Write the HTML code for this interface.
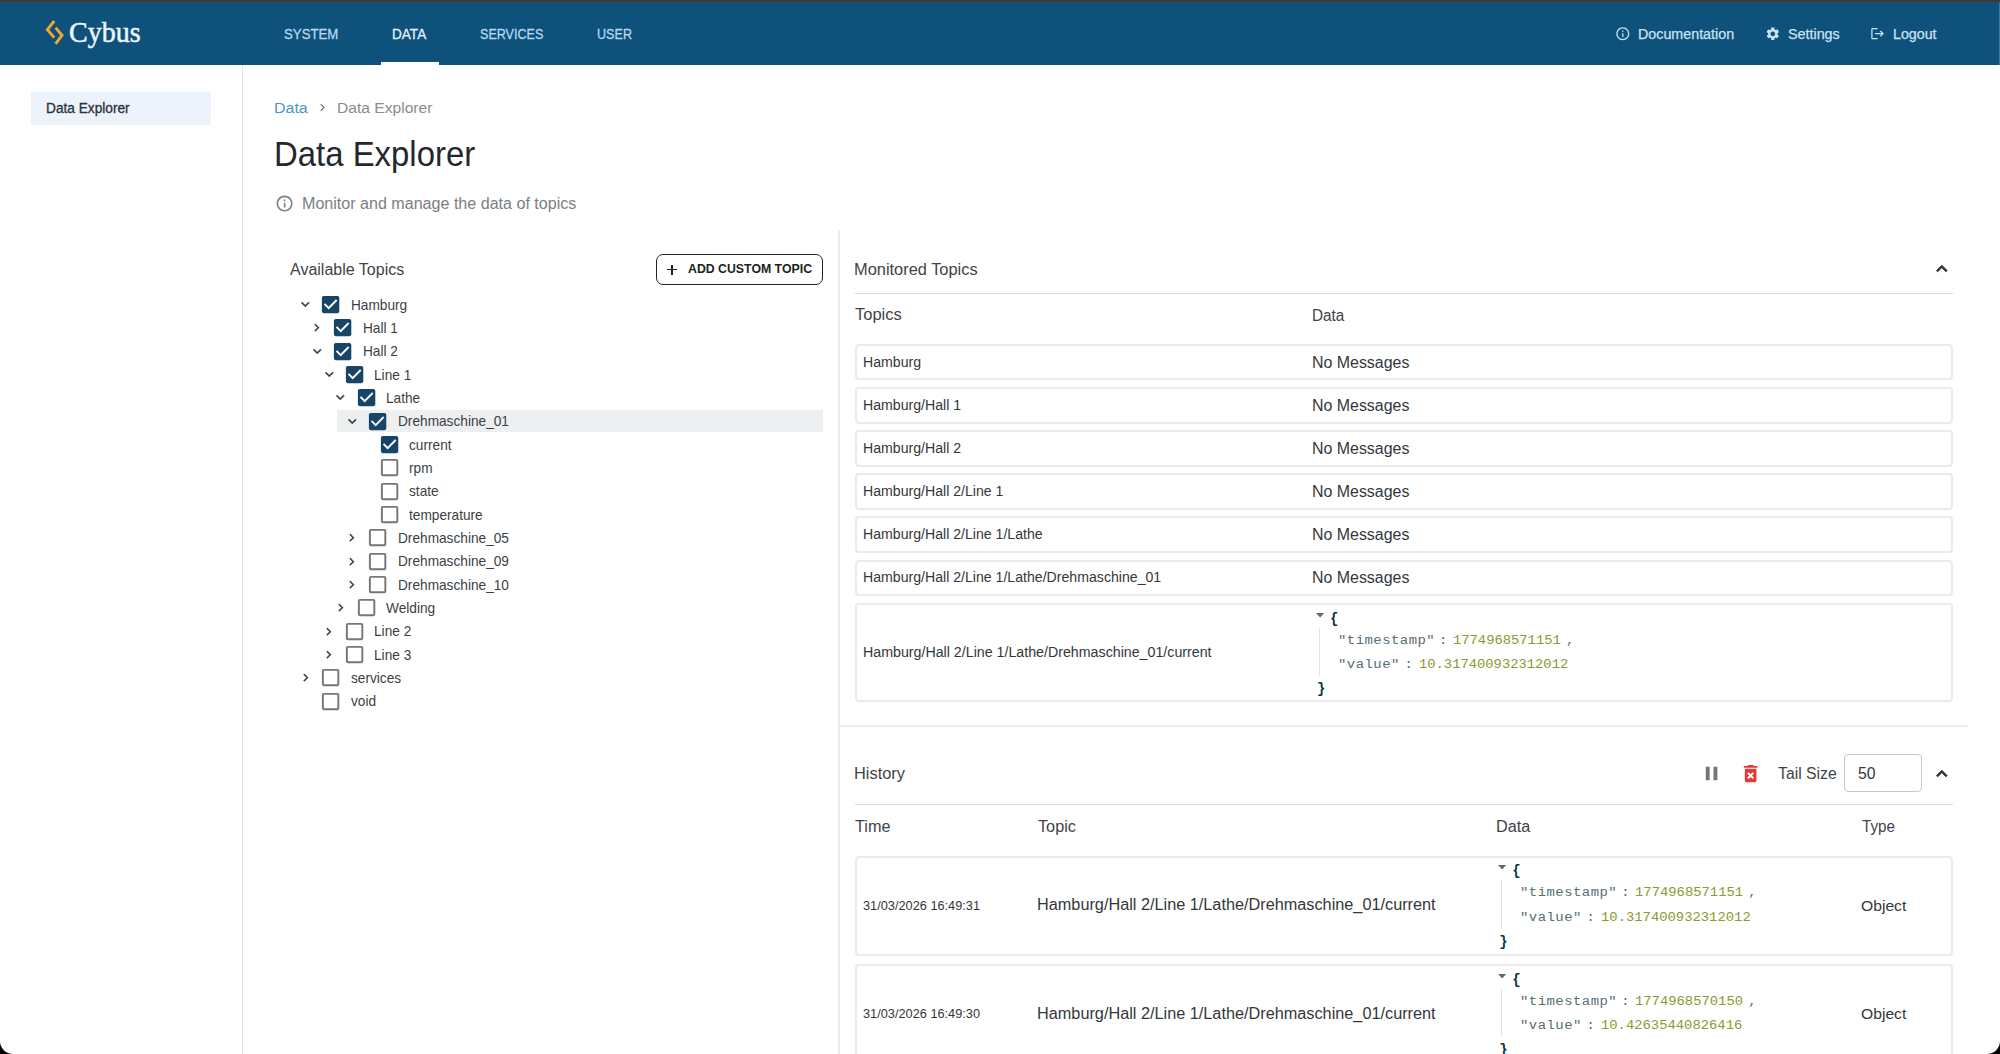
<!DOCTYPE html>
<html><head><meta charset="utf-8"><title>Data Explorer</title>
<style>
html,body{margin:0;padding:0;width:2000px;height:1054px;overflow:hidden;background:#000;}
#win{position:absolute;left:0;top:0;width:2000px;height:1054px;background:#fff;overflow:hidden;border-radius:0 0 13px 13px;font-family:"Liberation Sans",sans-serif;}
.t{position:absolute;white-space:pre;line-height:1;transform-origin:0 0;}
.a{position:absolute;box-sizing:border-box;}
svg{position:absolute;overflow:visible;}
</style></head><body><div id="win">
<div class="a" style="left:0.00px;top:0.00px;width:2000.00px;height:2.00px;background:#3c3b3b;"></div>
<div class="a" style="left:0.00px;top:2.00px;width:2000.00px;height:1.00px;background:#2f4c5f;"></div>
<div class="a" style="left:0.00px;top:3.00px;width:2000.00px;height:62.00px;background:#0e517b;"></div>
<div class="a" style="left:381.00px;top:62.00px;width:58.00px;height:3.00px;background:#ffffff;"></div>
<div class="a" style="left:1999.00px;top:2.20px;width:1.00px;height:62.80px;background:#3a78a6;"></div>
<svg style="left:40px;top:15px" width="30" height="35" viewBox="40 15 30 35"><polyline points="54.2,21.0 47.4,29.6 54.2,37.6" fill="none" stroke="#f0a92e" stroke-width="2.9" stroke-linejoin="miter"/><polyline points="55.6,27.6 62.0,35.4 55.6,43.8" fill="none" stroke="#f0a92e" stroke-width="2.9" stroke-linejoin="miter"/></svg>
<svg style="left:1614.90px;top:26.10px" width="15.60" height="15.60" viewBox="0 0 24 24"><path d="M11 7h2v2h-2zm0 4h2v6h-2zm1-9C6.48 2 2 6.48 2 12s4.48 10 10 10 10-4.48 10-10S17.52 2 12 2zm0 18c-4.41 0-8-3.59-8-8s3.59-8 8-8 8 3.59 8 8-3.59 8-8 8z" fill="#c9e3f5" /></svg>
<svg style="left:1765.00px;top:26.00px" width="15.60" height="15.60" viewBox="0 0 24 24"><path d="M19.14,12.94c0.04-0.3,0.06-0.61,0.06-0.94c0-0.32-0.02-0.64-0.07-0.94l2.03-1.58c0.18-0.14,0.23-0.41,0.12-0.61 l-1.92-3.32c-0.12-0.22-0.37-0.29-0.59-0.22l-2.39,0.96c-0.5-0.38-1.03-0.7-1.62-0.94L14.4,2.81c-0.04-0.24-0.24-0.41-0.48-0.41 h-3.84c-0.24,0-0.43,0.17-0.47,0.41L9.25,5.35C8.66,5.590,8.12,5.92,7.63,6.29L5.24,5.33c-0.22-0.08-0.47,0-0.59,0.22L2.74,8.87 C2.62,9.08,2.66,9.34,2.86,9.48l2.03,1.58C4.84,11.36,4.8,11.69,4.8,12s0.02,0.64,0.07,0.94l-2.03,1.58 c-0.18,0.14-0.23,0.41-0.12,0.61l1.92,3.32c0.12,0.22,0.37,0.29,0.59,0.22l2.39-0.96c0.5,0.38,1.03,0.7,1.62,0.94l0.36,2.54 c0.05,0.24,0.24,0.41,0.48,0.41h3.84c0.24,0,0.44-0.17,0.47-0.41l0.36-2.54c0.59-0.24,1.13-0.56,1.62-0.94l2.39,0.96 c0.22,0.08,0.47,0,0.59-0.22l1.92-3.32c0.12-0.22,0.07-0.47-0.12-0.61L19.14,12.94z M12,15.6c-1.98,0-3.6-1.62-3.6-3.6 s1.62-3.6,3.6-3.6s3.6,1.62,3.6,3.6S13.98,15.6,12,15.6z" fill="#c9e3f5" /></svg>
<svg style="left:1870.30px;top:25.90px" width="15.19" height="15.19" viewBox="0 0 24 24"><path d="M17 7l-1.41 1.41L18.17 11H8v2h10.17l-2.58 2.58L17 17l5-5zM4 5h8V3H4c-1.1 0-2 .9-2 2v14c0 1.1.9 2 2 2h8v-2H4V5z" fill="#c9e3f5" /></svg>
<div class="a" style="left:242.00px;top:65.00px;width:1.00px;height:989.00px;background:#e4e4e4;"></div>
<div class="a" style="left:30.80px;top:92.00px;width:180.20px;height:33.00px;background:#ecf3fb;"></div>
<svg style="left:314.60px;top:99.90px" width="14.88" height="14.88" viewBox="0 0 24 24"><path d="M10 6L8.59 7.41 13.17 12l-4.58 4.59L10 18l6-6z" fill="#6f7276" /></svg>
<svg style="left:274.90px;top:193.80px" width="19.20" height="19.20" viewBox="0 0 24 24"><path d="M11 7h2v2h-2zm0 4h2v6h-2zm1-9C6.48 2 2 6.48 2 12s4.48 10 10 10 10-4.48 10-10S17.52 2 12 2zm0 18c-4.41 0-8-3.59-8-8s3.59-8 8-8 8 3.59 8 8-3.59 8-8 8z" fill="#7c7e81" /></svg>
<div class="a" style="left:655.50px;top:254.00px;width:167.00px;height:30.50px;border:1.2px solid #222;border-radius:7px;"></div>
<div class="a" style="left:667.00px;top:268.80px;width:10.00px;height:1.60px;background:#222;"></div>
<div class="a" style="left:671.20px;top:264.60px;width:1.60px;height:10.00px;background:#222;"></div>
<div class="a" style="left:838.00px;top:230.00px;width:2.00px;height:824.00px;background:#ececec;"></div>
<div class="a" style="left:336.50px;top:409.80px;width:486.00px;height:22.70px;background:#eeeff1;"></div>
<svg style="left:319.40px;top:293.10px" width="23.20" height="23.20" viewBox="0 0 24 24"><path d="M19 3H5c-1.11 0-2 .9-2 2v14c0 1.1.89 2 2 2h14c1.11 0 2-.9 2-2V5c0-1.1-.89-2-2-2zm-9 14l-5-5 1.41-1.41L10 14.17l7.59-7.59L19 8l-9 9z" fill="#164567" /></svg>
<svg style="left:297.22px;top:296.11px" width="16.56" height="16.56" viewBox="0 0 24 24"><path d="M16.59 8.59L12 13.17 7.41 8.59 6 10l6 6 6-6z" fill="#3b3f45" stroke="#3b3f45" stroke-width="0.5"/></svg>
<svg style="left:331.10px;top:316.43px" width="23.20" height="23.20" viewBox="0 0 24 24"><path d="M19 3H5c-1.11 0-2 .9-2 2v14c0 1.1.89 2 2 2h14c1.11 0 2-.9 2-2V5c0-1.1-.89-2-2-2zm-9 14l-5-5 1.41-1.41L10 14.17l7.59-7.59L19 8l-9 9z" fill="#164567" /></svg>
<svg style="left:309.33px;top:320.25px" width="15.36" height="15.36" viewBox="0 0 24 24"><path d="M10 6L8.59 7.41 13.17 12l-4.58 4.59L10 18l6-6z" fill="#3b3f45" stroke="#3b3f45" stroke-width="0.5"/></svg>
<svg style="left:331.10px;top:339.76px" width="23.20" height="23.20" viewBox="0 0 24 24"><path d="M19 3H5c-1.11 0-2 .9-2 2v14c0 1.1.89 2 2 2h14c1.11 0 2-.9 2-2V5c0-1.1-.89-2-2-2zm-9 14l-5-5 1.41-1.41L10 14.17l7.59-7.59L19 8l-9 9z" fill="#164567" /></svg>
<svg style="left:308.92px;top:342.77px" width="16.56" height="16.56" viewBox="0 0 24 24"><path d="M16.59 8.59L12 13.17 7.41 8.59 6 10l6 6 6-6z" fill="#3b3f45" stroke="#3b3f45" stroke-width="0.5"/></svg>
<svg style="left:342.80px;top:363.09px" width="23.20" height="23.20" viewBox="0 0 24 24"><path d="M19 3H5c-1.11 0-2 .9-2 2v14c0 1.1.89 2 2 2h14c1.11 0 2-.9 2-2V5c0-1.1-.89-2-2-2zm-9 14l-5-5 1.41-1.41L10 14.17l7.59-7.59L19 8l-9 9z" fill="#164567" /></svg>
<svg style="left:320.62px;top:366.10px" width="16.56" height="16.56" viewBox="0 0 24 24"><path d="M16.59 8.59L12 13.17 7.41 8.59 6 10l6 6 6-6z" fill="#3b3f45" stroke="#3b3f45" stroke-width="0.5"/></svg>
<svg style="left:354.50px;top:386.42px" width="23.20" height="23.20" viewBox="0 0 24 24"><path d="M19 3H5c-1.11 0-2 .9-2 2v14c0 1.1.89 2 2 2h14c1.11 0 2-.9 2-2V5c0-1.1-.89-2-2-2zm-9 14l-5-5 1.41-1.41L10 14.17l7.59-7.59L19 8l-9 9z" fill="#164567" /></svg>
<svg style="left:332.32px;top:389.43px" width="16.56" height="16.56" viewBox="0 0 24 24"><path d="M16.59 8.59L12 13.17 7.41 8.59 6 10l6 6 6-6z" fill="#3b3f45" stroke="#3b3f45" stroke-width="0.5"/></svg>
<svg style="left:366.20px;top:409.75px" width="23.20" height="23.20" viewBox="0 0 24 24"><path d="M19 3H5c-1.11 0-2 .9-2 2v14c0 1.1.89 2 2 2h14c1.11 0 2-.9 2-2V5c0-1.1-.89-2-2-2zm-9 14l-5-5 1.41-1.41L10 14.17l7.59-7.59L19 8l-9 9z" fill="#164567" /></svg>
<svg style="left:344.02px;top:412.76px" width="16.56" height="16.56" viewBox="0 0 24 24"><path d="M16.59 8.59L12 13.17 7.41 8.59 6 10l6 6 6-6z" fill="#3b3f45" stroke="#3b3f45" stroke-width="0.5"/></svg>
<svg style="left:377.90px;top:433.08px" width="23.20" height="23.20" viewBox="0 0 24 24"><path d="M19 3H5c-1.11 0-2 .9-2 2v14c0 1.1.89 2 2 2h14c1.11 0 2-.9 2-2V5c0-1.1-.89-2-2-2zm-9 14l-5-5 1.41-1.41L10 14.17l7.59-7.59L19 8l-9 9z" fill="#164567" /></svg>
<svg style="left:377.90px;top:456.41px" width="23.20" height="23.20" viewBox="0 0 24 24"><path d="M19 5v14H5V5h14m0-2H5c-1.1 0-2 .9-2 2v14c0 1.1.9 2 2 2h14c1.1 0 2-.9 2-2V5c0-1.1-.9-2-2-2z" fill="#767676" /></svg>
<svg style="left:377.90px;top:479.74px" width="23.20" height="23.20" viewBox="0 0 24 24"><path d="M19 5v14H5V5h14m0-2H5c-1.1 0-2 .9-2 2v14c0 1.1.9 2 2 2h14c1.1 0 2-.9 2-2V5c0-1.1-.9-2-2-2z" fill="#767676" /></svg>
<svg style="left:377.90px;top:503.07px" width="23.20" height="23.20" viewBox="0 0 24 24"><path d="M19 5v14H5V5h14m0-2H5c-1.1 0-2 .9-2 2v14c0 1.1.9 2 2 2h14c1.1 0 2-.9 2-2V5c0-1.1-.9-2-2-2z" fill="#767676" /></svg>
<svg style="left:366.20px;top:526.40px" width="23.20" height="23.20" viewBox="0 0 24 24"><path d="M19 5v14H5V5h14m0-2H5c-1.1 0-2 .9-2 2v14c0 1.1.9 2 2 2h14c1.1 0 2-.9 2-2V5c0-1.1-.9-2-2-2z" fill="#767676" /></svg>
<svg style="left:344.43px;top:530.22px" width="15.36" height="15.36" viewBox="0 0 24 24"><path d="M10 6L8.59 7.41 13.17 12l-4.58 4.59L10 18l6-6z" fill="#3b3f45" stroke="#3b3f45" stroke-width="0.5"/></svg>
<svg style="left:366.20px;top:549.73px" width="23.20" height="23.20" viewBox="0 0 24 24"><path d="M19 5v14H5V5h14m0-2H5c-1.1 0-2 .9-2 2v14c0 1.1.9 2 2 2h14c1.1 0 2-.9 2-2V5c0-1.1-.9-2-2-2z" fill="#767676" /></svg>
<svg style="left:344.43px;top:553.55px" width="15.36" height="15.36" viewBox="0 0 24 24"><path d="M10 6L8.59 7.41 13.17 12l-4.58 4.59L10 18l6-6z" fill="#3b3f45" stroke="#3b3f45" stroke-width="0.5"/></svg>
<svg style="left:366.20px;top:573.06px" width="23.20" height="23.20" viewBox="0 0 24 24"><path d="M19 5v14H5V5h14m0-2H5c-1.1 0-2 .9-2 2v14c0 1.1.9 2 2 2h14c1.1 0 2-.9 2-2V5c0-1.1-.9-2-2-2z" fill="#767676" /></svg>
<svg style="left:344.43px;top:576.88px" width="15.36" height="15.36" viewBox="0 0 24 24"><path d="M10 6L8.59 7.41 13.17 12l-4.58 4.59L10 18l6-6z" fill="#3b3f45" stroke="#3b3f45" stroke-width="0.5"/></svg>
<svg style="left:354.50px;top:596.39px" width="23.20" height="23.20" viewBox="0 0 24 24"><path d="M19 5v14H5V5h14m0-2H5c-1.1 0-2 .9-2 2v14c0 1.1.9 2 2 2h14c1.1 0 2-.9 2-2V5c0-1.1-.9-2-2-2z" fill="#767676" /></svg>
<svg style="left:332.73px;top:600.21px" width="15.36" height="15.36" viewBox="0 0 24 24"><path d="M10 6L8.59 7.41 13.17 12l-4.58 4.59L10 18l6-6z" fill="#3b3f45" stroke="#3b3f45" stroke-width="0.5"/></svg>
<svg style="left:342.80px;top:619.72px" width="23.20" height="23.20" viewBox="0 0 24 24"><path d="M19 5v14H5V5h14m0-2H5c-1.1 0-2 .9-2 2v14c0 1.1.9 2 2 2h14c1.1 0 2-.9 2-2V5c0-1.1-.9-2-2-2z" fill="#767676" /></svg>
<svg style="left:321.03px;top:623.54px" width="15.36" height="15.36" viewBox="0 0 24 24"><path d="M10 6L8.59 7.41 13.17 12l-4.58 4.59L10 18l6-6z" fill="#3b3f45" stroke="#3b3f45" stroke-width="0.5"/></svg>
<svg style="left:342.80px;top:643.05px" width="23.20" height="23.20" viewBox="0 0 24 24"><path d="M19 5v14H5V5h14m0-2H5c-1.1 0-2 .9-2 2v14c0 1.1.9 2 2 2h14c1.1 0 2-.9 2-2V5c0-1.1-.9-2-2-2z" fill="#767676" /></svg>
<svg style="left:321.03px;top:646.87px" width="15.36" height="15.36" viewBox="0 0 24 24"><path d="M10 6L8.59 7.41 13.17 12l-4.58 4.59L10 18l6-6z" fill="#3b3f45" stroke="#3b3f45" stroke-width="0.5"/></svg>
<svg style="left:319.40px;top:666.38px" width="23.20" height="23.20" viewBox="0 0 24 24"><path d="M19 5v14H5V5h14m0-2H5c-1.1 0-2 .9-2 2v14c0 1.1.9 2 2 2h14c1.1 0 2-.9 2-2V5c0-1.1-.9-2-2-2z" fill="#767676" /></svg>
<svg style="left:297.63px;top:670.20px" width="15.36" height="15.36" viewBox="0 0 24 24"><path d="M10 6L8.59 7.41 13.17 12l-4.58 4.59L10 18l6-6z" fill="#3b3f45" stroke="#3b3f45" stroke-width="0.5"/></svg>
<svg style="left:319.40px;top:689.71px" width="23.20" height="23.20" viewBox="0 0 24 24"><path d="M19 5v14H5V5h14m0-2H5c-1.1 0-2 .9-2 2v14c0 1.1.9 2 2 2h14c1.1 0 2-.9 2-2V5c0-1.1-.9-2-2-2z" fill="#767676" /></svg>
<svg style="left:1930.60px;top:258.47px" width="21.60" height="21.60" viewBox="0 0 24 24"><path d="M12 8l-6 6 1.41 1.41L12 10.83l4.59 4.58L18 14z" fill="#2f3237" stroke="#2f3237" stroke-width="0.9"/></svg>
<div class="a" style="left:855.00px;top:292.60px;width:1098.00px;height:1.00px;background:#d9d9d9;"></div>
<div class="a" style="left:855.00px;top:344.20px;width:1097.50px;height:36.30px;border:2px solid #ebebeb;border-radius:4px;"></div>
<div class="a" style="left:855.00px;top:387.26px;width:1097.50px;height:36.30px;border:2px solid #ebebeb;border-radius:4px;"></div>
<div class="a" style="left:855.00px;top:430.32px;width:1097.50px;height:36.30px;border:2px solid #ebebeb;border-radius:4px;"></div>
<div class="a" style="left:855.00px;top:473.38px;width:1097.50px;height:36.30px;border:2px solid #ebebeb;border-radius:4px;"></div>
<div class="a" style="left:855.00px;top:516.44px;width:1097.50px;height:36.30px;border:2px solid #ebebeb;border-radius:4px;"></div>
<div class="a" style="left:855.00px;top:559.50px;width:1097.50px;height:36.30px;border:2px solid #ebebeb;border-radius:4px;"></div>
<div class="a" style="left:855.00px;top:603.30px;width:1097.50px;height:98.60px;border:2px solid #ebebeb;border-radius:4px;"></div>
<svg style="left:1315.50px;top:612.50px" width="10" height="6" viewBox="0 0 10 6"><polygon points="0,0 8.2,0 4.1,4.6" fill="#586e75"/></svg>
<div class="a" style="left:1318.70px;top:627.50px;width:1.00px;height:48.70px;background:#e2e2e2;"></div>
<div class="a" style="left:838.00px;top:725.00px;width:1130.00px;height:2.00px;background:#ececec;"></div>
<svg style="left:1700.11px;top:761.77px" width="23.16" height="23.16" viewBox="0 0 24 24"><path d="M6 19h4V5H6v14zm8-14v14h4V5h-4z" fill="#767676" /></svg>
<svg style="left:1739.15px;top:761.69px" width="23.28" height="23.28" viewBox="0 0 24 24"><path d="M6 19c0 1.1.9 2 2 2h8c1.1 0 2-.9 2-2V7H6v12zm2.46-7.12l1.41-1.41L12 12.59l2.12-2.12 1.41 1.41L13.41 14l2.12 2.12-1.41 1.41L12 15.41l-2.12 2.12-1.41-1.41L10.59 14l-2.13-2.12zM15.5 4l-1-1h-5l-1 1H5v2h14V4z" fill="#e23b36" /></svg>
<div class="a" style="left:1844.20px;top:753.80px;width:77.50px;height:38.40px;border:1px solid #c8c8c8;border-radius:4px;"></div>
<svg style="left:1930.60px;top:763.07px" width="21.60" height="21.60" viewBox="0 0 24 24"><path d="M12 8l-6 6 1.41 1.41L12 10.83l4.59 4.58L18 14z" fill="#2f3237" stroke="#2f3237" stroke-width="0.9"/></svg>
<div class="a" style="left:855.00px;top:804.00px;width:1098.00px;height:1.20px;background:#d9d9d9;"></div>
<div class="a" style="left:855.00px;top:856.30px;width:1097.50px;height:100.00px;border:2px solid #ebebeb;border-radius:4px;"></div>
<div class="a" style="left:855.00px;top:964.40px;width:1097.50px;height:100.00px;border:2px solid #ebebeb;border-radius:4px;"></div>
<svg style="left:1497.70px;top:865.40px" width="10" height="6" viewBox="0 0 10 6"><polygon points="0,0 8.2,0 4.1,4.6" fill="#586e75"/></svg>
<div class="a" style="left:1500.90px;top:880.40px;width:1.00px;height:48.70px;background:#e2e2e2;"></div>
<svg style="left:1497.70px;top:973.50px" width="10" height="6" viewBox="0 0 10 6"><polygon points="0,0 8.2,0 4.1,4.6" fill="#586e75"/></svg>
<div class="a" style="left:1500.90px;top:988.50px;width:1.00px;height:48.70px;background:#e2e2e2;"></div>
<div class="t" id="logo" style='left:68.81px;top:17.73px;font-size:29.00px;color:#eef6fd;font-family:"Liberation Serif", serif;transform:scaleX(0.9649);-webkit-text-stroke:0.5px #eef6fd;'>Cybus</div>
<div class="t" id="nav1" style='left:283.94px;top:25.75px;font-size:15.00px;color:#b6d8f0;font-family:"Liberation Sans", sans-serif;transform:scaleX(0.8813);-webkit-text-stroke:0.3px #b6d8f0;'>SYSTEM</div>
<div class="t" id="nav2" style='left:391.90px;top:25.75px;font-size:15.00px;color:#e3f1fb;font-family:"Liberation Sans", sans-serif;transform:scaleX(0.9056);-webkit-text-stroke:0.3px #e3f1fb;'>DATA</div>
<div class="t" id="nav3" style='left:480.28px;top:25.75px;font-size:15.00px;color:#b6d8f0;font-family:"Liberation Sans", sans-serif;transform:scaleX(0.8372);-webkit-text-stroke:0.3px #b6d8f0;'>SERVICES</div>
<div class="t" id="nav4" style='left:597.27px;top:25.75px;font-size:15.00px;color:#b6d8f0;font-family:"Liberation Sans", sans-serif;transform:scaleX(0.8390);-webkit-text-stroke:0.3px #b6d8f0;'>USER</div>
<div class="t" id="doc" style='left:1637.86px;top:26.78px;font-size:14.50px;color:#c9e3f5;font-family:"Liberation Sans", sans-serif;transform:scaleX(0.9853);-webkit-text-stroke:0.25px #c9e3f5;'>Documentation</div>
<div class="t" id="set" style='left:1787.83px;top:26.78px;font-size:14.50px;color:#c9e3f5;font-family:"Liberation Sans", sans-serif;transform:scaleX(0.9876);-webkit-text-stroke:0.25px #c9e3f5;'>Settings</div>
<div class="t" id="out" style='left:1893.24px;top:26.78px;font-size:14.50px;color:#c9e3f5;font-family:"Liberation Sans", sans-serif;transform:scaleX(0.9822);-webkit-text-stroke:0.25px #c9e3f5;'>Logout</div>
<div class="t" id="side" style='left:45.53px;top:101.10px;font-size:14.00px;color:#2c3239;font-family:"Liberation Sans", sans-serif;transform:scaleX(0.9774);-webkit-text-stroke:0.3px #2c3239;'>Data Explorer</div>
<div class="t" id="bc1" style='left:273.92px;top:99.83px;font-size:15.50px;color:#4b93d1;font-family:"Liberation Sans", sans-serif;transform:scaleX(1.0290);'>Data</div>
<div class="t" id="bc2" style='left:337.37px;top:99.83px;font-size:15.50px;color:#8a8c8f;font-family:"Liberation Sans", sans-serif;transform:scaleX(1.0073);'>Data Explorer</div>
<div class="t" id="h1" style='left:273.63px;top:137.08px;font-size:34.50px;color:#24282e;font-family:"Liberation Sans", sans-serif;transform:scaleX(0.9536);'>Data Explorer</div>
<div class="t" id="sub" style='left:301.64px;top:196.40px;font-size:16.00px;color:#7c7e81;font-family:"Liberation Sans", sans-serif;transform:scaleX(1.0046);'>Monitor and manage the data of topics</div>
<div class="t" id="avail" style='left:289.90px;top:262.07px;font-size:15.80px;color:#3f4348;font-family:"Liberation Sans", sans-serif;transform:scaleX(1.0132);'>Available Topics</div>
<div class="t" id="btn" style='left:688.29px;top:263.10px;font-size:12.00px;color:#1d1f22;font-family:"Liberation Sans", sans-serif;font-weight:700;transform:scaleX(1.0258);'>ADD CUSTOM TOPIC</div>
<div class="t" id="tr0" style='left:350.81px;top:297.68px;font-size:14.50px;color:#3b3f45;font-family:"Liberation Sans", sans-serif;transform:scaleX(0.9428);'>Hamburg</div>
<div class="t" id="tr1" style='left:362.51px;top:321.00px;font-size:14.50px;color:#3b3f45;font-family:"Liberation Sans", sans-serif;transform:scaleX(0.9428);'>Hall 1</div>
<div class="t" id="tr2" style='left:362.51px;top:344.33px;font-size:14.50px;color:#3b3f45;font-family:"Liberation Sans", sans-serif;transform:scaleX(0.9428);'>Hall 2</div>
<div class="t" id="tr3" style='left:374.21px;top:367.67px;font-size:14.50px;color:#3b3f45;font-family:"Liberation Sans", sans-serif;transform:scaleX(0.9428);'>Line 1</div>
<div class="t" id="tr4" style='left:385.91px;top:391.00px;font-size:14.50px;color:#3b3f45;font-family:"Liberation Sans", sans-serif;transform:scaleX(0.9428);'>Lathe</div>
<div class="t" id="tr5" style='left:397.61px;top:414.32px;font-size:14.50px;color:#3b3f45;font-family:"Liberation Sans", sans-serif;transform:scaleX(0.9428);'>Drehmaschine_01</div>
<div class="t" id="tr6" style='left:409.31px;top:437.66px;font-size:14.50px;color:#3b3f45;font-family:"Liberation Sans", sans-serif;transform:scaleX(0.9428);'>current</div>
<div class="t" id="tr7" style='left:409.31px;top:460.99px;font-size:14.50px;color:#3b3f45;font-family:"Liberation Sans", sans-serif;transform:scaleX(0.9428);'>rpm</div>
<div class="t" id="tr8" style='left:409.31px;top:484.31px;font-size:14.50px;color:#3b3f45;font-family:"Liberation Sans", sans-serif;transform:scaleX(0.9428);'>state</div>
<div class="t" id="tr9" style='left:409.31px;top:507.65px;font-size:14.50px;color:#3b3f45;font-family:"Liberation Sans", sans-serif;transform:scaleX(0.9428);'>temperature</div>
<div class="t" id="tr10" style='left:397.61px;top:530.97px;font-size:14.50px;color:#3b3f45;font-family:"Liberation Sans", sans-serif;transform:scaleX(0.9428);'>Drehmaschine_05</div>
<div class="t" id="tr11" style='left:397.61px;top:554.30px;font-size:14.50px;color:#3b3f45;font-family:"Liberation Sans", sans-serif;transform:scaleX(0.9428);'>Drehmaschine_09</div>
<div class="t" id="tr12" style='left:397.61px;top:577.63px;font-size:14.50px;color:#3b3f45;font-family:"Liberation Sans", sans-serif;transform:scaleX(0.9428);'>Drehmaschine_10</div>
<div class="t" id="tr13" style='left:385.91px;top:600.96px;font-size:14.50px;color:#3b3f45;font-family:"Liberation Sans", sans-serif;transform:scaleX(0.9428);'>Welding</div>
<div class="t" id="tr14" style='left:374.21px;top:624.29px;font-size:14.50px;color:#3b3f45;font-family:"Liberation Sans", sans-serif;transform:scaleX(0.9428);'>Line 2</div>
<div class="t" id="tr15" style='left:374.21px;top:647.62px;font-size:14.50px;color:#3b3f45;font-family:"Liberation Sans", sans-serif;transform:scaleX(0.9428);'>Line 3</div>
<div class="t" id="tr16" style='left:350.81px;top:670.95px;font-size:14.50px;color:#3b3f45;font-family:"Liberation Sans", sans-serif;transform:scaleX(0.9428);'>services</div>
<div class="t" id="tr17" style='left:350.81px;top:694.28px;font-size:14.50px;color:#3b3f45;font-family:"Liberation Sans", sans-serif;transform:scaleX(0.9428);'>void</div>
<div class="t" id="mon" style='left:853.99px;top:262.07px;font-size:15.80px;color:#3f4348;font-family:"Liberation Sans", sans-serif;transform:scaleX(1.0375);'>Monitored Topics</div>
<div class="t" id="thd1" style='left:854.96px;top:307.47px;font-size:15.80px;color:#3f4348;font-family:"Liberation Sans", sans-serif;transform:scaleX(1.0448);'>Topics</div>
<div class="t" id="thd2" style='left:1311.56px;top:307.57px;font-size:15.80px;color:#3f4348;font-family:"Liberation Sans", sans-serif;transform:scaleX(0.9712);'>Data</div>
<div class="t" id="ct0" style='left:862.71px;top:354.70px;font-size:14.00px;color:#33373c;font-family:"Liberation Sans", sans-serif;transform:scaleX(1.0083);'>Hamburg</div>
<div class="t" id="nm0" style='left:1312.31px;top:354.60px;font-size:16.00px;color:#33373c;font-family:"Liberation Sans", sans-serif;transform:scaleX(0.9954);'>No Messages</div>
<div class="t" id="ct1" style='left:862.71px;top:397.76px;font-size:14.00px;color:#33373c;font-family:"Liberation Sans", sans-serif;transform:scaleX(1.0083);'>Hamburg/Hall 1</div>
<div class="t" id="nm1" style='left:1312.31px;top:397.66px;font-size:16.00px;color:#33373c;font-family:"Liberation Sans", sans-serif;transform:scaleX(0.9954);'>No Messages</div>
<div class="t" id="ct2" style='left:862.71px;top:440.82px;font-size:14.00px;color:#33373c;font-family:"Liberation Sans", sans-serif;transform:scaleX(1.0083);'>Hamburg/Hall 2</div>
<div class="t" id="nm2" style='left:1312.31px;top:440.72px;font-size:16.00px;color:#33373c;font-family:"Liberation Sans", sans-serif;transform:scaleX(0.9954);'>No Messages</div>
<div class="t" id="ct3" style='left:862.71px;top:483.88px;font-size:14.00px;color:#33373c;font-family:"Liberation Sans", sans-serif;transform:scaleX(1.0083);'>Hamburg/Hall 2/Line 1</div>
<div class="t" id="nm3" style='left:1312.31px;top:483.78px;font-size:16.00px;color:#33373c;font-family:"Liberation Sans", sans-serif;transform:scaleX(0.9954);'>No Messages</div>
<div class="t" id="ct4" style='left:862.71px;top:526.94px;font-size:14.00px;color:#33373c;font-family:"Liberation Sans", sans-serif;transform:scaleX(1.0083);'>Hamburg/Hall 2/Line 1/Lathe</div>
<div class="t" id="nm4" style='left:1312.31px;top:526.84px;font-size:16.00px;color:#33373c;font-family:"Liberation Sans", sans-serif;transform:scaleX(0.9954);'>No Messages</div>
<div class="t" id="ct5" style='left:862.71px;top:570.00px;font-size:14.00px;color:#33373c;font-family:"Liberation Sans", sans-serif;transform:scaleX(1.0083);'>Hamburg/Hall 2/Line 1/Lathe/Drehmaschine_01</div>
<div class="t" id="nm5" style='left:1312.31px;top:569.90px;font-size:16.00px;color:#33373c;font-family:"Liberation Sans", sans-serif;transform:scaleX(0.9954);'>No Messages</div>
<div class="t" id="ct6" style='left:862.65px;top:644.70px;font-size:14.00px;color:#33373c;font-family:"Liberation Sans", sans-serif;transform:scaleX(1.0156);'>Hamburg/Hall 2/Line 1/Lathe/Drehmaschine_01/current</div>
<div class="t" id="j0k1" style='left:1338.10px;top:633.59px;font-size:13.70px;color:#586e75;font-family:"Liberation Mono", monospace;transform:scaleX(1.0196);letter-spacing:0.45px;'>&quot;timestamp&quot;</div>
<div class="t" id="j0c1" style='left:1439.00px;top:633.59px;font-size:13.70px;color:#586e75;font-family:"Liberation Mono", monospace;'>:</div>
<div class="t" id="j0v1" style='left:1453.11px;top:633.59px;font-size:13.70px;color:#879b30;font-family:"Liberation Mono", monospace;transform:scaleX(1.0094);'>1774968571151</div>
<div class="t" id="j0m1" style='left:1566.00px;top:633.59px;font-size:13.70px;color:#586e75;font-family:"Liberation Mono", monospace;'>,</div>
<div class="t" id="j0k2" style='left:1338.10px;top:658.29px;font-size:13.70px;color:#586e75;font-family:"Liberation Mono", monospace;transform:scaleX(1.0196);letter-spacing:0.45px;'>&quot;value&quot;</div>
<div class="t" id="j0c2" style='left:1404.40px;top:658.29px;font-size:13.70px;color:#586e75;font-family:"Liberation Mono", monospace;'>:</div>
<div class="t" id="j0v2" style='left:1418.76px;top:658.29px;font-size:13.70px;color:#879b30;font-family:"Liberation Mono", monospace;transform:scaleX(1.0094);'>10.317400932312012</div>
<div class="t" id="j0b1" style='left:1330.00px;top:611.56px;font-size:14.00px;color:#073642;font-family:"Liberation Mono", monospace;font-weight:700;'>{</div>
<div class="t" id="j0b2" style='left:1317.00px;top:682.06px;font-size:14.00px;color:#073642;font-family:"Liberation Mono", monospace;font-weight:700;'>}</div>
<div class="t" id="hist" style='left:853.74px;top:765.57px;font-size:15.80px;color:#3f4348;font-family:"Liberation Sans", sans-serif;transform:scaleX(1.0355);'>History</div>
<div class="t" id="tail" style='left:1778.00px;top:765.57px;font-size:15.80px;color:#3f4348;font-family:"Liberation Sans", sans-serif;transform:scaleX(0.9985);'>Tail Size</div>
<div class="t" id="fifty" style='left:1858.30px;top:765.57px;font-size:15.80px;color:#33373c;font-family:"Liberation Sans", sans-serif;transform:scaleX(0.9985);'>50</div>
<div class="t" id="hh1" style='left:855.37px;top:819.07px;font-size:15.80px;color:#3f4348;font-family:"Liberation Sans", sans-serif;transform:scaleX(1.0280);'>Time</div>
<div class="t" id="hh2" style='left:1038.27px;top:819.07px;font-size:15.80px;color:#3f4348;font-family:"Liberation Sans", sans-serif;transform:scaleX(1.0280);'>Topic</div>
<div class="t" id="hh3" style='left:1495.77px;top:819.07px;font-size:15.80px;color:#3f4348;font-family:"Liberation Sans", sans-serif;transform:scaleX(1.0280);'>Data</div>
<div class="t" id="hh4" style='left:1862.44px;top:819.07px;font-size:15.80px;color:#3f4348;font-family:"Liberation Sans", sans-serif;transform:scaleX(0.9597);'>Type</div>
<div class="t" id="ht0" style='left:862.93px;top:900.38px;font-size:12.50px;color:#33373c;font-family:"Liberation Sans", sans-serif;transform:scaleX(1.0205);'>31/03/2026 16:49:31</div>
<div class="t" id="hp0" style='left:1036.78px;top:897.40px;font-size:16.00px;color:#33373c;font-family:"Liberation Sans", sans-serif;transform:scaleX(1.0163);'>Hamburg/Hall 2/Line 1/Lathe/Drehmaschine_01/current</div>
<div class="t" id="ho0" style='left:1861.04px;top:897.83px;font-size:15.50px;color:#33373c;font-family:"Liberation Sans", sans-serif;transform:scaleX(1.0111);'>Object</div>
<div class="t" id="jh0k1" style='left:1520.00px;top:886.49px;font-size:13.70px;color:#586e75;font-family:"Liberation Mono", monospace;transform:scaleX(1.0193);letter-spacing:0.45px;'>&quot;timestamp&quot;</div>
<div class="t" id="jh0c1" style='left:1621.20px;top:886.49px;font-size:13.70px;color:#586e75;font-family:"Liberation Mono", monospace;'>:</div>
<div class="t" id="jh0v1" style='left:1635.02px;top:886.49px;font-size:13.70px;color:#879b30;font-family:"Liberation Mono", monospace;transform:scaleX(1.0125);'>1774968571151</div>
<div class="t" id="jh0m1" style='left:1748.20px;top:886.49px;font-size:13.70px;color:#586e75;font-family:"Liberation Mono", monospace;'>,</div>
<div class="t" id="jh0k2" style='left:1520.00px;top:911.19px;font-size:13.70px;color:#586e75;font-family:"Liberation Mono", monospace;transform:scaleX(1.0193);letter-spacing:0.45px;'>&quot;value&quot;</div>
<div class="t" id="jh0c2" style='left:1586.60px;top:911.19px;font-size:13.70px;color:#586e75;font-family:"Liberation Mono", monospace;'>:</div>
<div class="t" id="jh0v2" style='left:1600.67px;top:911.19px;font-size:13.70px;color:#879b30;font-family:"Liberation Mono", monospace;transform:scaleX(1.0125);'>10.317400932312012</div>
<div class="t" id="jh0b1" style='left:1512.20px;top:864.46px;font-size:14.00px;color:#073642;font-family:"Liberation Mono", monospace;font-weight:700;'>{</div>
<div class="t" id="jh0b2" style='left:1499.20px;top:934.96px;font-size:14.00px;color:#073642;font-family:"Liberation Mono", monospace;font-weight:700;'>}</div>
<div class="t" id="ht1" style='left:862.93px;top:1008.48px;font-size:12.50px;color:#33373c;font-family:"Liberation Sans", sans-serif;transform:scaleX(1.0205);'>31/03/2026 16:49:30</div>
<div class="t" id="hp1" style='left:1036.78px;top:1005.50px;font-size:16.00px;color:#33373c;font-family:"Liberation Sans", sans-serif;transform:scaleX(1.0163);'>Hamburg/Hall 2/Line 1/Lathe/Drehmaschine_01/current</div>
<div class="t" id="ho1" style='left:1861.04px;top:1005.93px;font-size:15.50px;color:#33373c;font-family:"Liberation Sans", sans-serif;transform:scaleX(1.0111);'>Object</div>
<div class="t" id="jh1k1" style='left:1520.00px;top:994.59px;font-size:13.70px;color:#586e75;font-family:"Liberation Mono", monospace;transform:scaleX(1.0193);letter-spacing:0.45px;'>&quot;timestamp&quot;</div>
<div class="t" id="jh1c1" style='left:1621.20px;top:994.59px;font-size:13.70px;color:#586e75;font-family:"Liberation Mono", monospace;'>:</div>
<div class="t" id="jh1v1" style='left:1635.03px;top:994.59px;font-size:13.70px;color:#879b30;font-family:"Liberation Mono", monospace;transform:scaleX(1.0117);'>1774968570150</div>
<div class="t" id="jh1m1" style='left:1748.20px;top:994.59px;font-size:13.70px;color:#586e75;font-family:"Liberation Mono", monospace;'>,</div>
<div class="t" id="jh1k2" style='left:1520.00px;top:1019.29px;font-size:13.70px;color:#586e75;font-family:"Liberation Mono", monospace;transform:scaleX(1.0193);letter-spacing:0.45px;'>&quot;value&quot;</div>
<div class="t" id="jh1c2" style='left:1586.60px;top:1019.29px;font-size:13.70px;color:#586e75;font-family:"Liberation Mono", monospace;'>:</div>
<div class="t" id="jh1v2" style='left:1600.68px;top:1019.29px;font-size:13.70px;color:#879b30;font-family:"Liberation Mono", monospace;transform:scaleX(1.0117);'>10.42635440826416</div>
<div class="t" id="jh1b1" style='left:1512.20px;top:972.56px;font-size:14.00px;color:#073642;font-family:"Liberation Mono", monospace;font-weight:700;'>{</div>
<div class="t" id="jh1b2" style='left:1499.20px;top:1043.06px;font-size:14.00px;color:#073642;font-family:"Liberation Mono", monospace;font-weight:700;'>}</div>
</div></body></html>
